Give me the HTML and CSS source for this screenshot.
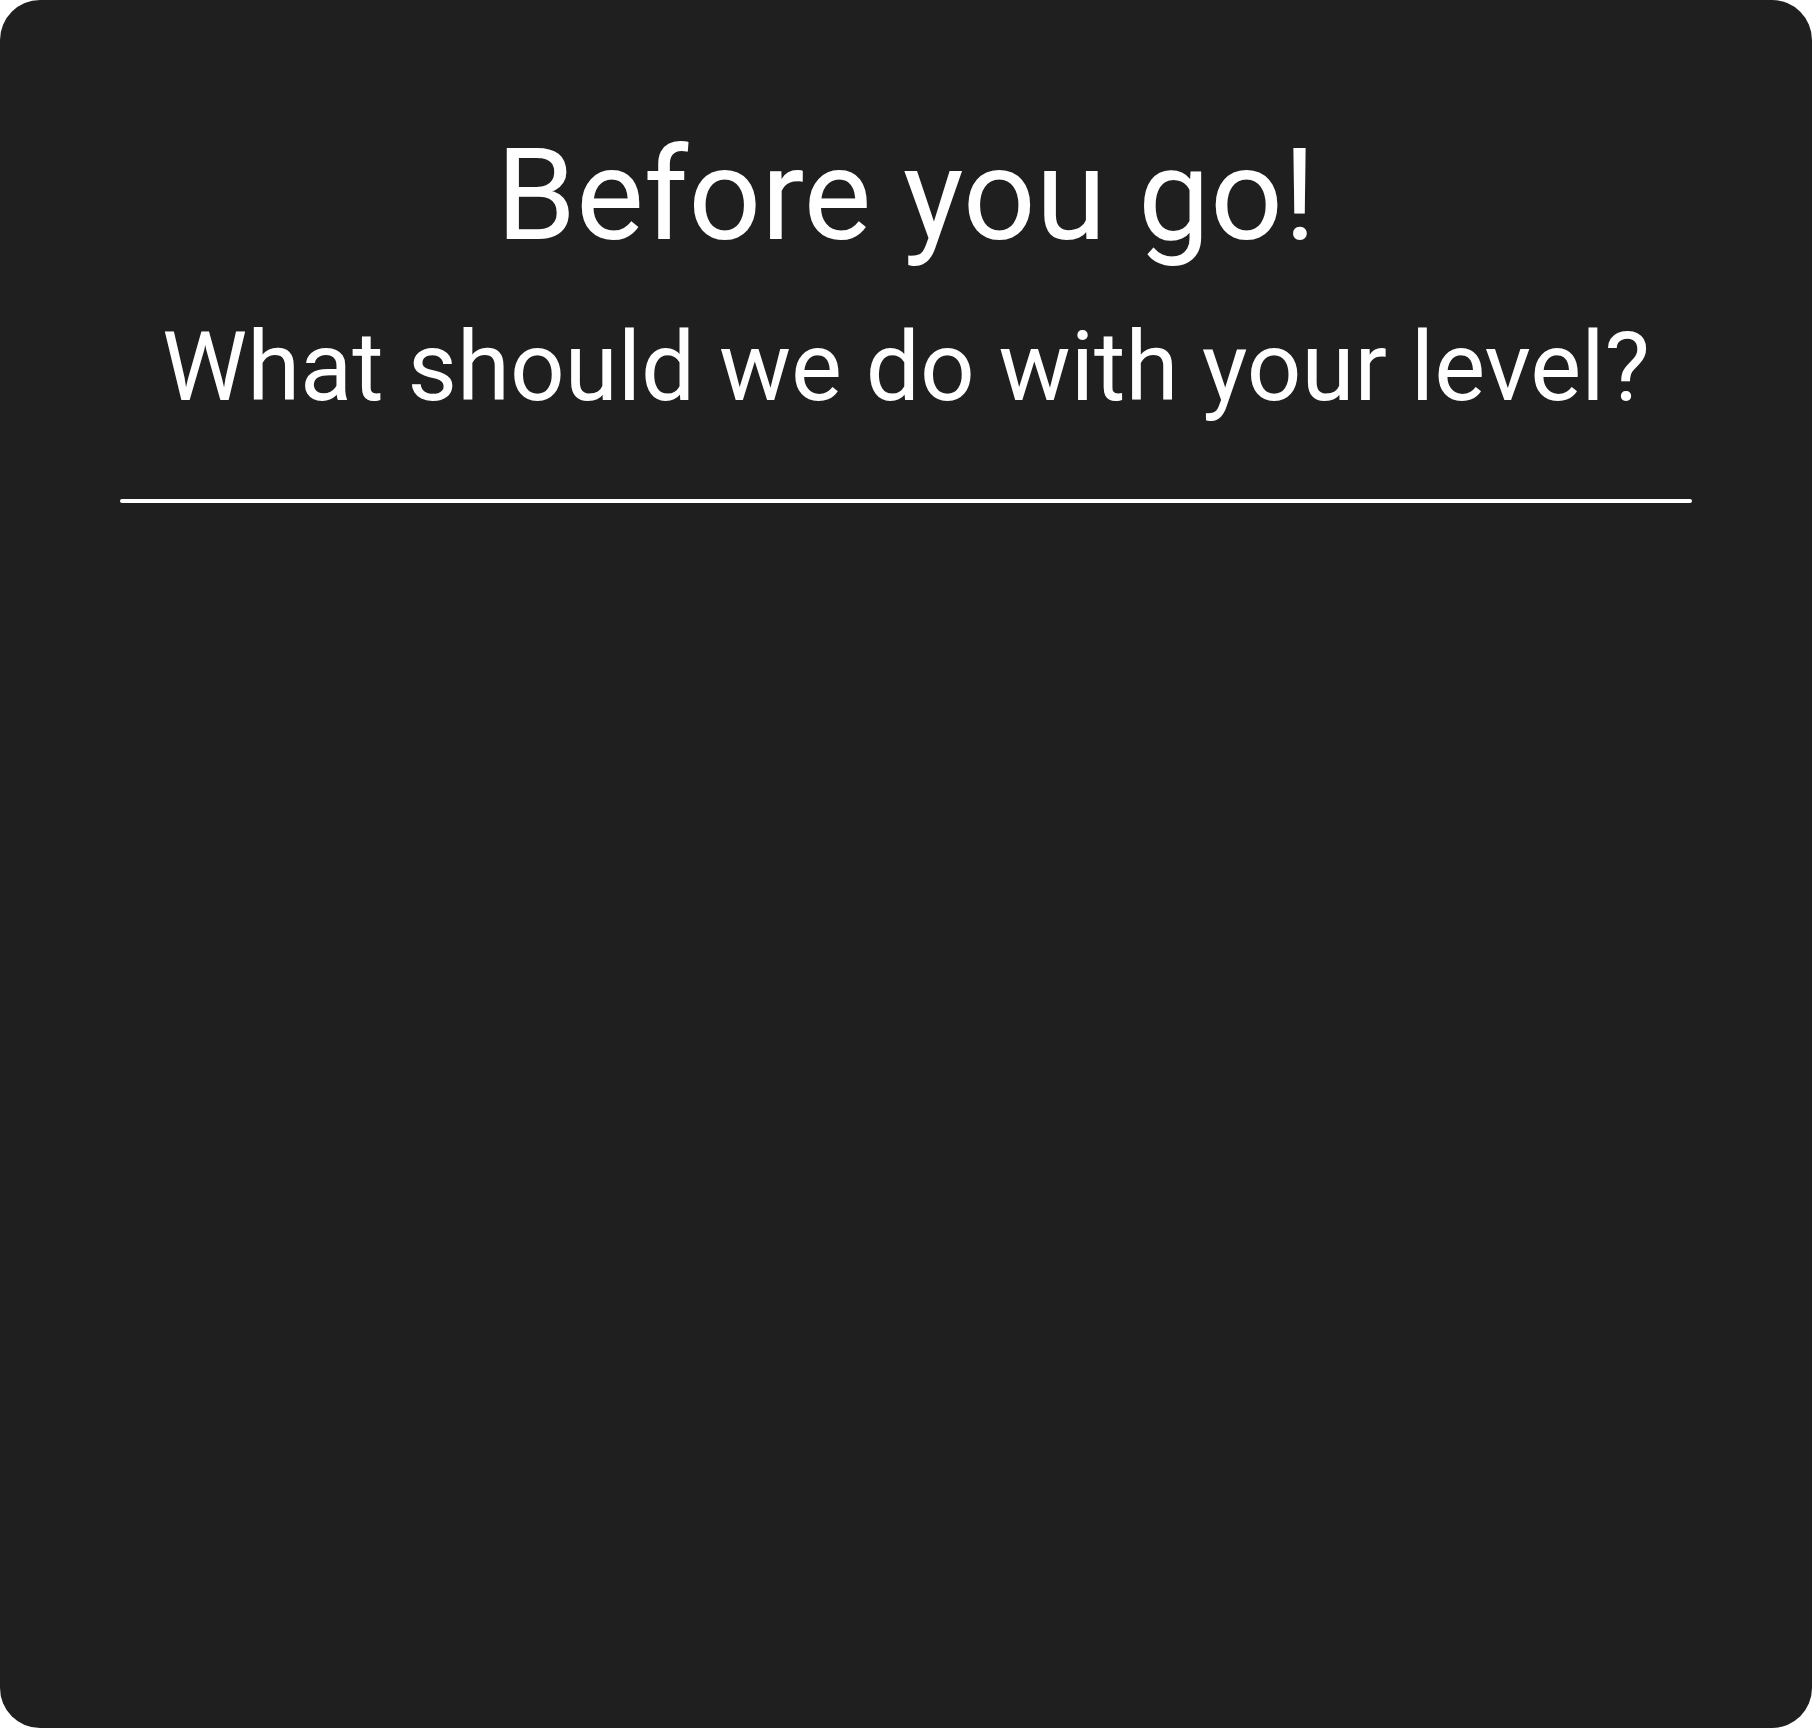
FILE: index.html
```html
<!DOCTYPE html>
<html lang="en">
<head>
<meta charset="utf-8">
<title>Before you go!</title>
<link rel="stylesheet" href="styles.css">
</head>
<body>
<main class="card">
  <h1 class="title">Before you go!</h1>
  <p class="subtitle">What should we do with your level?</p>
  <hr class="divider">
</main>
</body>
</html>
```

FILE: styles.css
```css
html, body {
  margin: 0;
  padding: 0;
  background: #ffffff;
}
body {
  font-family: Roboto, "Liberation Sans", sans-serif;
}
.card {
  box-sizing: border-box;
  width: 1812px;
  height: 1728px;
  background: #1f1f1f;
  border-radius: 40px;
  padding: 120px 120px 0;
  display: flex;
  flex-direction: column;
  align-items: center;
  color: #ffffff;
}
.title {
  margin: 0;
  font-size: 128px;
  font-weight: 400;
  line-height: normal;
  text-align: center;
}
.subtitle {
  margin: 41px 0 0;
  font-size: 96px;
  font-weight: 400;
  line-height: normal;
  text-align: center;
}
.divider {
  align-self: stretch;
  margin: 76px 0 0;
  border: 0;
  height: 4px;
  border-radius: 2px;
  background: #ffffff;
}
```
